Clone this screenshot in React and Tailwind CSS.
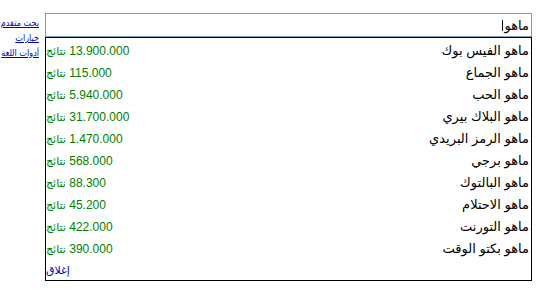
const suggestions = [
  ["ماهو الفيس بوك", "13.900.000"],
  ["ماهو الجماع", "115.000"],
  ["ماهو الحب", "5.940.000"],
  ["ماهو البلاك بيري", "31.700.000"],
  ["ماهو الرمز البريدي", "1.470.000"],
  ["ماهو برجي", "568.000"],
  ["ماهو البالتوك", "88.300"],
  ["ماهو الاحتلام", "45.200"],
  ["ماهو التورنت", "422.000"],
  ["ماهو بكتو الوقت", "390.000"],
];

const font = { fontFamily: '"Liberation Sans", "DejaVu Sans", sans-serif' };
const linkFont = {
  fontFamily: '"DejaVu Sans Condensed", "Liberation Sans", "DejaVu Sans", sans-serif',
};

export default function App() {
  return (
    <div
      dir="rtl"
      style={font}
      className="flex items-start w-[548px] h-[296px] bg-white pt-[13px] pr-[16px]"
    >
      {/* search box + suggest dropdown */}
      <div className="w-[487px] shrink-0">
        <div className="h-[24px] border border-[#7f9db9] flex items-center pr-[2px]">
          <span className="text-[13px] text-black leading-none">ماهو</span>
          <span className="w-px h-[11px] bg-black mr-[2px]" />
        </div>
        <div className="border border-black pt-[2px]">
          {suggestions.map(([q, n]) => (
            <div
              key={q}
              className="h-[22px] flex items-center justify-between pr-[2px]"
            >
              <span className="text-[13px] text-black whitespace-nowrap">{q}</span>
              <span className="text-[12px] text-[#008000] whitespace-nowrap">
                {n} <span className="text-[11px]">نتائج</span>
              </span>
            </div>
          ))}
          <div className="h-[20px] flex items-center justify-end">
            <a href="#" className="text-[11px] text-[#0000cc] no-underline">
              إغلاق
            </a>
          </div>
        </div>
      </div>

      {/* side links */}
      <div
        style={linkFont}
        className="w-[39px] mr-[6px] pt-[3px] flex flex-col text-[9px] leading-[15px] whitespace-nowrap"
      >
        <a href="#" className="text-[#0000cc] underline">بحث متقدم</a>
        <a href="#" className="text-[#0000cc] underline">خيارات</a>
        <a href="#" className="text-[#0000cc] underline">أدوات اللغة</a>
      </div>
    </div>
  );
}
